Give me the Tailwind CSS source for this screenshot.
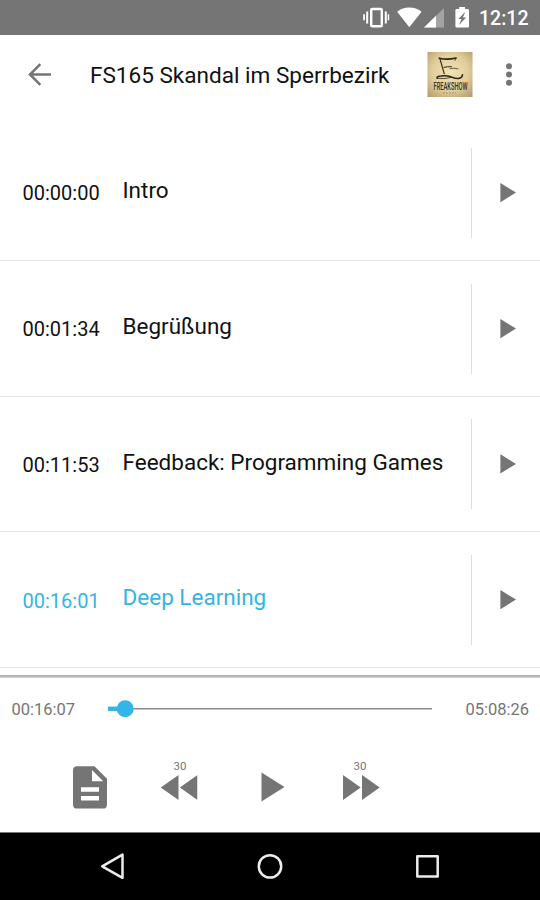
<!DOCTYPE html>
<html lang="de">
<head>
<meta charset="utf-8">
<title>FS165 Skandal im Sperrbezirk</title>
<script src="https://cdn.jsdelivr.net/npm/@tailwindcss/browser@4"></script>
</head>
<body class="bg-white">
<div class="w-[540px] h-[900px] flex flex-col overflow-hidden bg-white font-[Roboto,sans-serif] text-[#111]">
  <!-- Status bar -->
  <div class="h-[35px] shrink-0 bg-[#757575] flex items-center justify-end">
    <svg class="w-[108px] h-[35px]" viewBox="362 0 108 35" fill="#fff">
      <rect x="371.200" y="9" width="10.600" height="17.200" rx="1" fill="none" stroke="#fff" stroke-width="2.400"/>
      <path d="M366.200 11.500h2v12h-2zM363.200 14.300h1.700v6h-1.700zM384.800 11.500h2v12h-2zM387.700 14.300h1.500v6h-1.500z"/>
      <path d="M397.200 11.800Q402.500 7.600 409.300 7.600T421.600 11.800L409.300 27.200z"/>
      <path d="M444 8v19.400h-20z" fill="#a3a3a3"/><path d="M436 15.800v11.600h-12z"/>
      <path d="M456.600 9h2.600V7h5.800v2h2.800q1.200 0 1.200 1.200v16q0 1.200-1.200 1.200h-11.200q-1.200 0-1.200-1.200v-16q0-1.200 1.200-1.200z"/>
      <path fill="#757575" d="M465.300 11.800l-7 7.200h3.200l-2.400 6 7-7.600h-3.200z"/>
    </svg>
    <span class="w-[70px] pl-[9px] pt-[2px] text-[19.500px] leading-none font-medium text-white whitespace-nowrap">12:12</span>
  </div>

  <!-- Toolbar -->
  <header class="h-[90px] shrink-0 flex items-start pt-[17px]">
    <svg class="w-[90px] h-[45px] shrink-0" viewBox="0 52 90 45" fill="none" stroke="#757575" stroke-width="2.500"><path d="M51 74.500H30M40.300 64.200L30 74.500l10.300 10.300"/></svg>
    <h1 class="w-[337px] pt-[1px] text-[22.550px] leading-[45px] whitespace-nowrap">FS165 Skandal im Sperrbezirk</h1>
    <svg class="w-[46px] h-[45px] shrink-0" viewBox="0 0 46 45">
      <defs><radialGradient id="paper" cx="50%" cy="45%" r="72%"><stop offset="0" stop-color="#f1e1b4"/><stop offset=".55" stop-color="#e2ce9c"/><stop offset="1" stop-color="#b69b69"/></radialGradient></defs>
      <rect x=".5" width="45" height="45" fill="url(#paper)"/>
      <g fill="none" stroke="#2d2619" stroke-linecap="round">
        <path d="M12.300 6.200Q20 8.200 29 6" stroke-width="1.700"/>
        <path d="M13 7l4.300 14.800" stroke-width="1.100"/>
        <path d="M17 15.300q3-.8 7.500-.6" stroke-width="1"/>
        <path d="M29 6.300l-1 2" stroke-width=".8"/>
        <path d="M23 16.600q4-1 8 .2" stroke-width=".7"/>
        <path d="M10.300 26.300Q9 24.500 14 24Q20 23.200 25 25.200Q34.500 28.500 35.500 22.800" stroke-width="1.500"/>
        <path d="M10.300 26.300Q17 27.300 24 25.500" stroke-width=".8"/>
      </g>
      <text x="6.500" y="38.300" font-family="Roboto, sans-serif" font-size="10.200" font-weight="500" fill="#382e1e" transform="translate(6.500 0) scale(.565 1) translate(-6.500 0)">FREAKSHOW</text>
      <path d="M16 41h13" stroke="#a48d62" stroke-width=".8" stroke-dasharray="2 1"/>
    </svg>
    <svg class="w-[67px] h-[45px] shrink-0" viewBox="473 52 67 45" fill="#757575"><circle cx="509" cy="66.200" r="3"/><circle cx="509" cy="74.500" r="3"/><circle cx="509" cy="82.800" r="3"/></svg>
  </header>

  <!-- Chapters -->
  <main class="h-[550px] shrink-0 overflow-hidden">
    <div class="h-[136px] border-b border-[#e3e3e3] flex items-center">
      <span class="w-[122px] pl-[22.500px] pt-px text-[20px]">00:00:00</span>
      <span class="w-[349px] pl-[.5px] pb-[3px] text-[22.500px] whitespace-nowrap">Intro</span>
      <div class="h-[90px] w-[69px] border-l border-[#dedede] flex items-center pl-[28px]"><svg class="w-4 h-5" viewBox="0 0 16 20" fill="#757575"><path d="M.4 0v19.200L16 9.600z"/></svg></div>
    </div>
    <div class="h-[136px] border-b border-[#e3e3e3] flex items-center">
      <span class="w-[122px] pl-[22.500px] pt-px text-[20px]">00:01:34</span>
      <span class="w-[349px] pl-[.5px] pb-[3px] text-[22.500px] whitespace-nowrap">Begrüßung</span>
      <div class="h-[90px] w-[69px] border-l border-[#dedede] flex items-center pl-[28px]"><svg class="w-4 h-5" viewBox="0 0 16 20" fill="#757575"><path d="M.4 0v19.200L16 9.600z"/></svg></div>
    </div>
    <div class="h-[135px] border-b border-[#e3e3e3] flex items-center">
      <span class="w-[122px] pl-[22.500px] pt-px text-[20px]">00:11:53</span>
      <span class="w-[349px] pl-[.5px] pb-[3px] text-[22.500px] whitespace-nowrap">Feedback: Programming Games</span>
      <div class="h-[90px] w-[69px] border-l border-[#dedede] flex items-center pl-[28px]"><svg class="w-4 h-5" viewBox="0 0 16 20" fill="#757575"><path d="M.4 .3v19.200L16 9.900z"/></svg></div>
    </div>
    <div class="h-[136px] border-b border-[#e3e3e3] flex items-center">
      <span class="w-[122px] pl-[22.500px] pt-[3px] text-[20px] text-[#33b5e5]">00:16:01</span>
      <span class="w-[349px] pl-[.5px] pb-[3px] text-[22.500px] whitespace-nowrap text-[#33b5e5]">Deep Learning</span>
      <div class="h-[90px] w-[69px] border-l border-[#dedede] flex items-center pl-[28px]"><svg class="w-4 h-5" viewBox="0 0 16 20" fill="#757575"><path d="M.4 0v19.200L16 9.600z"/></svg></div>
    </div>
  </main>

  <!-- Player -->
  <footer class="h-[158px] shrink-0 flex flex-col text-[#757575]">
    <div class="h-[3px] bg-linear-to-b from-[#a8a8a8] to-[#d6d6d6]"></div>
    <div class="h-[62px] flex items-center text-[16.500px]">
      <span class="w-[108px] pl-[11.500px] pt-[2px]">00:16:07</span>
      <svg class="w-[324px] h-[20px]" viewBox="0 0 324 20"><path d="M0 9.750h324" stroke="#8c8c8c" stroke-width="1.500"/><path d="M0 9.800h17" stroke="#33b5e5" stroke-width="4.500"/><circle cx="17.200" cy="9.800" r="8.500" fill="#33b5e5"/></svg>
      <span class="pl-[33.500px] pt-[2px]">05:08:26</span>
    </div>
    <div class="h-[92px] flex">
      <div class="w-[135px] pl-[73px] pt-[26px]"><svg class="w-[34px] h-[43px]" viewBox="0 0 34 43"><path fill="#757575" fill-rule="evenodd" d="M4.200.2H21.500L34 12.700V38.400Q34 42.600 29.800 42.600H4.200Q0 42.600 0 38.400V4.400Q0 .2 4.200 .2zM19 4v11.200h11.200zM8 21.200v4.600h18v-4.600zM8 30v4.400h18V30z"/></svg></div>
      <div class="w-[90px] flex flex-col items-center pt-[18px] text-[11.500px] leading-4"><span>30</span><svg class="mt-px w-[37px] h-[25px] translate-x-[-1.500px]" viewBox="0 0 37 25" fill="#757575"><path d="M18 0v25L.3 12.500zM37 0v25L19.300 12.500z"/></svg></div>
      <div class="w-[90px] pl-[36px] pt-[32px]"><svg class="w-[24px] h-[30px]" viewBox="0 0 24 30" fill="#757575"><path d="M.5 .6v29L23.500 15z"/></svg></div>
      <div class="w-[90px] flex flex-col items-center pt-[18px] text-[11.500px] leading-4"><span>30</span><svg class="mt-px w-[37px] h-[25px] translate-x-[1px]" viewBox="0 0 37 25" fill="#757575"><path d="M0 0v25l17.700-12.500zM19 0v25l17.700-12.500z"/></svg></div>
    </div>
    <div class="h-px bg-[#777]"></div>
  </footer>

  <!-- Navigation bar -->
  <nav class="h-[67px] shrink-0 bg-black">
    <svg class="w-[540px] h-[67px]" viewBox="0 833 540 67" fill="none" stroke="#ececec" stroke-width="2.500" stroke-linejoin="round">
      <path d="M122.500 854.600v23.200L102.200 866.400z"/><circle cx="270" cy="866.400" r="11.200"/><rect x="417.300" y="856.300" width="20.400" height="20.200"/>
    </svg>
  </nav>
</div>
</body>
</html>
